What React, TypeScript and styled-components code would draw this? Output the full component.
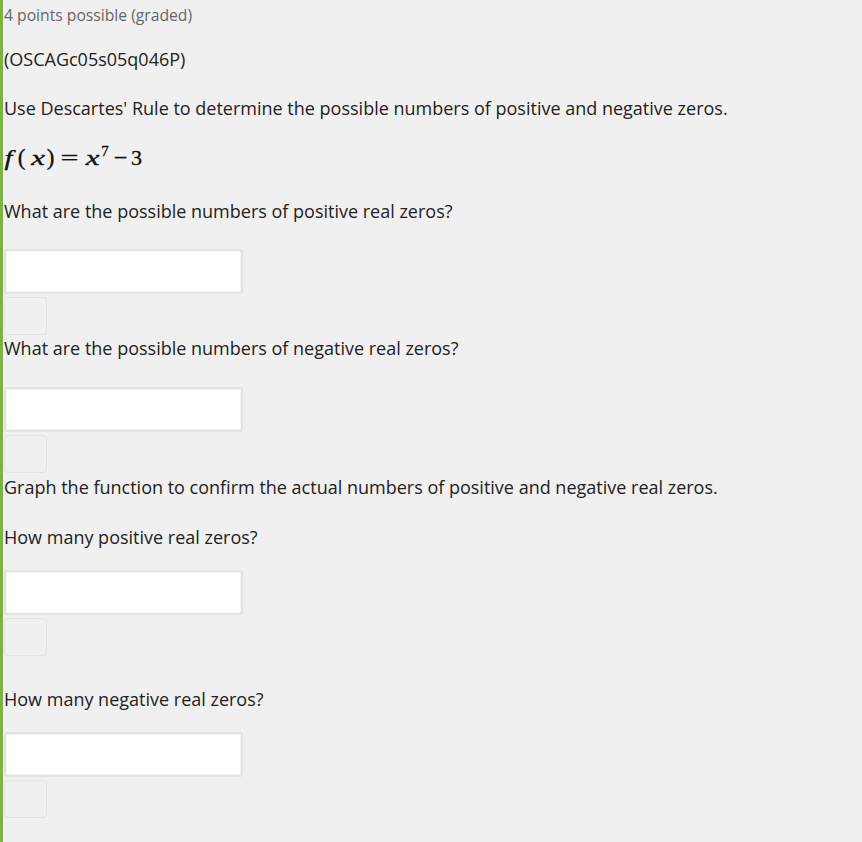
import React from 'react';
import styled, { createGlobalStyle } from 'styled-components';

const GlobalStyle = createGlobalStyle`
  html, body {
    margin: 0;
    padding: 0;
    background: #f0f0f0;
  }
  body {
    font-family: "Open Sans", "Liberation Sans", sans-serif;
    color: #333;
  }
`;

const Problem = styled.div`
  min-height: 842px;
  box-sizing: border-box;
  border-left: 3px solid #7cb342;
  padding: 4px 0 0 1px;
  display: flex;
  flex-direction: column;
`;

const Points = styled.div`
  font-size: 15.7px;
  line-height: 22px;
  color: #666;
`;

const Text = styled.p<{ $top?: number }>`
  margin: ${(p) => p.$top ?? 24}px 0 0;
  font-size: 18px;
  line-height: 24px;
  color: #222;
`;

const Math = styled.div`
  margin-top: 26px;
  height: 24px;
  font-family: "Liberation Serif", "DejaVu Serif", serif;
  font-size: 22px;
  line-height: 24px;
  color: #111;
  display: flex;
  align-items: baseline;
  -webkit-text-stroke: 0.35px #111;
`;

// each glyph sits centred in a box of fixed width, so spacing follows the TeX layout
const Glyph = styled.span<{ $w: number; $italic?: boolean; $size?: number; $sx?: number; $raise?: number }>`
  display: inline-flex;
  justify-content: center;
  flex: 0 0 ${(p) => p.$w}px;
  width: ${(p) => p.$w}px;
  min-width: 0;
  white-space: nowrap;
  font-style: ${(p) => (p.$italic ? 'italic' : 'normal')};
  font-size: ${(p) => p.$size ?? 22}px;
  transform: scaleX(${(p) => p.$sx ?? 1});
  position: relative;
  top: ${(p) => -(p.$raise ?? 0)}px;
`;

const Answer = styled.input<{ $top: number }>`
  display: block;
  box-sizing: border-box;
  width: 239px;
  height: 45px;
  margin-top: ${(p) => p.$top}px;
  background: #fff;
  border: 2px solid #e3e3e3;
  border-radius: 3px;
  box-shadow: inset 0 0 0 1px #f4f4f4;
  outline: none;
`;

const Preview = styled.div`
  width: 43px;
  height: 38px;
  box-sizing: border-box;
  margin-top: 3px;
  border: 1px solid #e2e2e2;
  border-radius: 4px;
`;

const Part = ({ top }: { top: number }) => (
  <>
    <Answer $top={top} />
    <Preview />
  </>
);

export default function App() {
  return (
    <>
      <GlobalStyle />
      <Problem>
        <Points>4 points possible (graded)</Points>
        <Text $top={21}>(OSCAGc05s05q046P)</Text>
        <Text $top={25}>Use Descartes' Rule to determine the possible numbers of positive and negative zeros.</Text>
        <Math>
          <Glyph $w={9} $italic $sx={1.3}>f</Glyph>
          <Glyph $w={17} $size={23}>(</Glyph>
          <Glyph $w={16} $italic $sx={1.4}>x</Glyph>
          <Glyph $w={9} $size={23}>)</Glyph>
          <Glyph $w={29} $sx={1.45}>=</Glyph>
          <Glyph $w={17} $italic $sx={1.4}>x</Glyph>
          <Glyph $w={8} $size={15} $raise={9}>7</Glyph>
          <Glyph $w={23} $sx={1.1}>−</Glyph>
          <Glyph $w={9}>3</Glyph>
        </Math>
        <Text $top={29}>What are the possible numbers of positive real zeros?</Text>
        <Part top={26} />
        <Text $top={1}>What are the possible numbers of negative real zeros?</Text>
        <Part top={27} />
        <Text $top={2}>Graph the function to confirm the actual numbers of positive and negative real zeros.</Text>
        <Text $top={26}>How many positive real zeros?</Text>
        <Part top={21} />
        <Text $top={31}>How many negative real zeros?</Text>
        <Part top={21} />
      </Problem>
    </>
  );
}
